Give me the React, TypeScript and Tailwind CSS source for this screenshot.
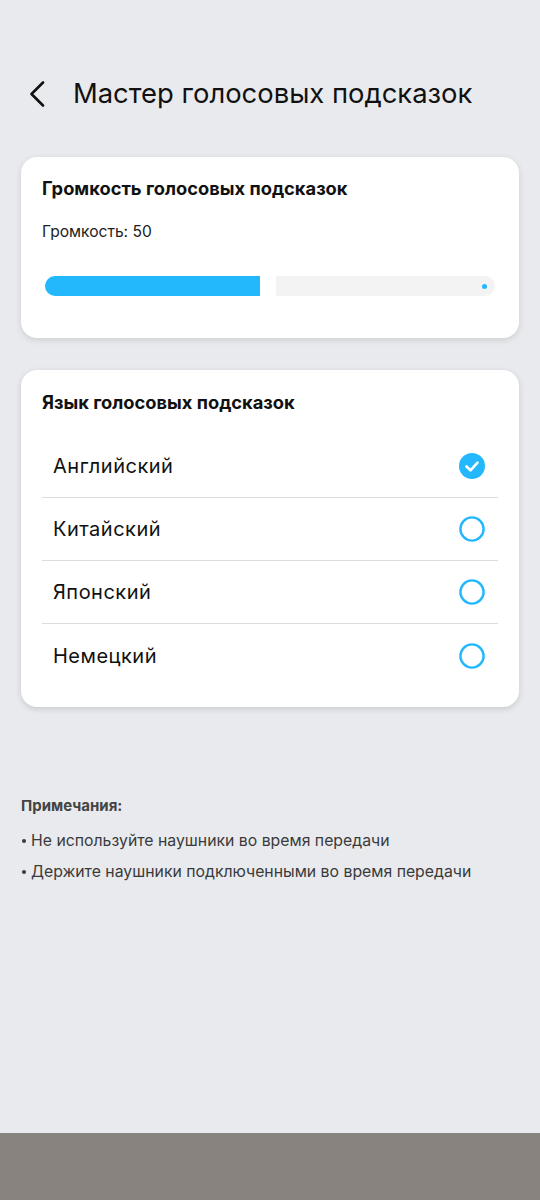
import { useState } from "react";

const languages = ["Английский", "Китайский", "Японский", "Немецкий"];
const notes = [
  "Не используйте наушники во время передачи",
  "Держите наушники подключенными во время передачи",
];

function Radio({ checked }: { checked: boolean }) {
  if (checked) {
    return (
      <svg width="26" height="26" viewBox="0 0 26 26">
        <circle cx="13" cy="13" r="13" fill="#22b8fb" />
        <path d="M7.5 13.5l4 3.8 7-7.6" fill="none" stroke="#fff" strokeWidth="2.6" strokeLinecap="round" strokeLinejoin="round" />
      </svg>
    );
  }
  return (
    <svg width="26" height="26" viewBox="0 0 26 26">
      <circle cx="13" cy="13" r="11.6" fill="none" stroke="#22b8fb" strokeWidth="2.4" />
    </svg>
  );
}

export default function App() {
  const [lang, setLang] = useState(0);
  const volume = 50;

  return (
    <div className="min-h-[1200px] w-[540px] bg-[#e9eaee] flex flex-col font-['Inter',sans-serif] text-[#111]">
      <div className="flex items-center h-[50px] mt-[69px] pl-[28px]">
        <svg width="18" height="26" viewBox="0 0 18 26" className="shrink-0">
          <path d="M15 1.5L3.5 13 15 24.5" fill="none" stroke="#111" strokeWidth="2.6" strokeLinecap="round" strokeLinejoin="round" />
        </svg>
        <h1 className="ml-[27px] text-[27.4px] leading-none font-normal">Мастер голосовых подсказок</h1>
      </div>

      <div className="mx-[21px] mt-[38px] bg-white rounded-[16px] shadow-[0_2px_6px_rgba(0,0,0,0.12)] px-[21px] pt-[19px] pb-[42px]">
        <h2 className="text-[18.3px] leading-[24px] font-bold">Громкость голосовых подсказок</h2>
        <div className="mt-[22px] text-[15.6px] leading-[20px] text-[#222]">Громкость: {volume}</div>
        <div className="mt-[34px] ml-[3px] mr-[3px] flex items-center gap-[16px] h-[20px]">
          <div className="w-[215px] h-[20px] bg-[#22b8fb] rounded-l-full rounded-r-[2px]" />
          <div className="flex-1 h-[20px] bg-[#f3f3f4] rounded-r-full rounded-l-[2px] flex items-center justify-end pr-[8px]">
            <div className="w-[5px] h-[5px] rounded-full bg-[#22b8fb]" />
          </div>
        </div>
      </div>

      <div className="mx-[21px] mt-[32px] bg-white rounded-[16px] shadow-[0_2px_6px_rgba(0,0,0,0.14)] px-[21px] pt-[20px] pb-[20px]">
        <h2 className="text-[18.3px] leading-[24px] font-bold">Язык голосовых подсказок</h2>
        <div className="mt-[21px] flex flex-col">
          {languages.map((l, i) => (
            <button
              key={l}
              onClick={() => setLang(i)}
              className={
                "h-[63px] flex items-center justify-between pl-[11px] pr-[13px] text-left " +
                (i < languages.length - 1 ? "border-b border-[#dcdcdf]" : "")
              }
            >
              <span className="text-[20px] tracking-[0.5px] text-[#111]">{l}</span>
              <Radio checked={lang === i} />
            </button>
          ))}
        </div>
      </div>

      <div className="px-[21px] mt-[89px]">
        <div className="text-[15px] leading-[20px] font-bold text-[#444]">Примечания:</div>
        <div className="mt-[9px] text-[15.8px] leading-[31px] text-[#3a3a3a]">
          {notes.map((n) => (
            <div key={n} className="flex items-center">
              <span className="w-[4px] h-[4px] rounded-full bg-[#3a3a3a] ml-[1px] mr-[5px] shrink-0" />
              <span>{n}</span>
            </div>
          ))}
        </div>
      </div>

      <div className="flex-1" />
      <div className="h-[67px] bg-[#89837f]" />
    </div>
  );
}
